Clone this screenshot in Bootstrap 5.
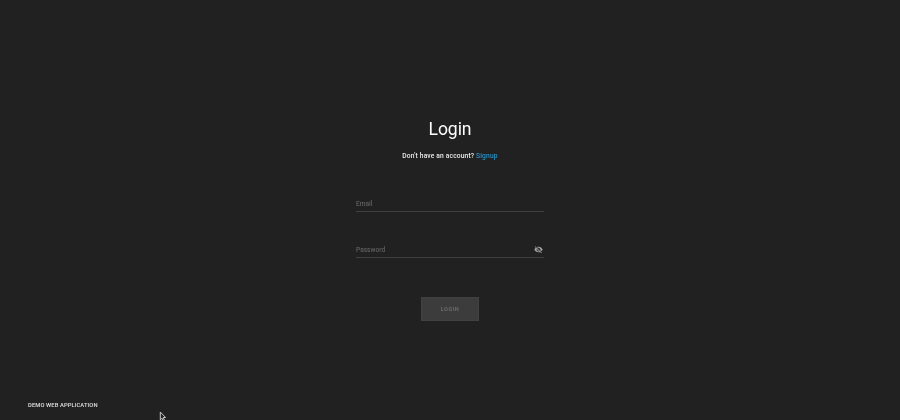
<!DOCTYPE html>
<html lang="en">
<head>
<meta charset="utf-8">
<meta name="viewport" content="width=device-width, initial-scale=1">
<title>Login</title>
<link href="https://cdn.jsdelivr.net/npm/bootstrap@5.3.0/dist/css/bootstrap.min.css" rel="stylesheet">
<style>
body { background: #212121; color: #eee; font-family: Roboto, sans-serif; font-size: 6.7px; line-height: 10px; }
.login-panel, .app-name { will-change: opacity; opacity: .99; }
.login-panel { width: 188px; padding-top: 118px; }
.login-title { font-size: 17.6px; line-height: 22px; font-weight: 400; color: #fff; letter-spacing: -.1px; }
.signup-line { margin-top: 11px; font-weight: 500; letter-spacing: .15px; }
.signup-line a { color: #2794cc; }
.line-field { height: 16px; border-bottom: 1px solid #414141; }
.email-field { margin-top: 35px; }
.password-field { margin-top: 30px; }
.line-field .form-control, .line-field .form-control:focus { height: 15px; padding: 1px 0 0; font-size: 6.6px; font-weight: 500; line-height: 14px; color: #eee; box-shadow: none; letter-spacing: 0; }
.line-field .form-control::placeholder { color: #606060; opacity: 1; }
.eye-button { width: 12px; height: 12px; line-height: 0; color: #a6a6a6; }
.login-button, .login-button:disabled { width: 58px; height: 24px; margin-top: 39px; padding: 1px 0 0; font-size: 5.6px; line-height: 1; font-weight: 700; letter-spacing: .5px; color: #6c6c6c; background: #3d3d3d; border-color: #424242; opacity: 1; }
.app-name { padding: 0 28px 10px; font-size: 5.8px; font-weight: 500; color: #e2e2e2; letter-spacing: .1px; }
.pointer { left: 159px; top: 411px; }
</style>
</head>
<body class="vh-100 overflow-hidden d-flex flex-column">
<main class="login-panel mx-auto">
  <h1 class="login-title text-center mb-0">Login</h1>
  <p class="signup-line text-center text-nowrap mb-0">Don't have an account? <a href="#" class="text-decoration-none">Signup</a></p>
  <form>
    <div class="line-field email-field">
      <input type="email" class="form-control bg-transparent border-0 rounded-0" placeholder="Email" aria-label="Email">
    </div>
    <div class="line-field password-field d-flex align-items-center">
      <input type="password" class="form-control bg-transparent border-0 rounded-0" placeholder="Password" aria-label="Password">
      <button type="button" class="eye-button btn border-0 p-0 flex-shrink-0" aria-label="Show password">
        <svg width="9" height="9" viewBox="0 0 24 24" fill="currentColor"><path d="M12 7c2.76 0 5 2.24 5 5 0 .65-.13 1.26-.36 1.83l2.92 2.92c1.51-1.26 2.7-2.89 3.43-4.75-1.73-4.39-6-7.5-11-7.5-1.4 0-2.74.25-3.98.7l2.16 2.16C10.74 7.13 11.35 7 12 7zM2 4.27l2.28 2.28.46.46C3.08 8.3 1.78 10.02 1 12c1.73 4.39 6 7.5 11 7.5 1.55 0 3.03-.3 4.38-.84l.42.42L19.73 22 21 20.73 3.27 3 2 4.27zM7.53 9.8l1.55 1.55c-.05.21-.08.43-.08.65 0 1.66 1.34 3 3 3 .22 0 .44-.03.65-.08l1.55 1.55c-.67.33-1.41.53-2.2.53-2.76 0-5-2.24-5-5 0-.79.2-1.53.53-2.2zm4.31-.78 3.15 3.15.02-.16c0-1.66-1.34-3-3-3l-.17.01z"/></svg>
      </button>
    </div>
    <button type="submit" class="login-button btn rounded-0 d-block mx-auto" disabled>LOGIN</button>
  </form>
</main>
<footer class="app-name mt-auto">DEMO WEB APPLICATION</footer>
<svg class="pointer position-absolute" width="8" height="9" viewBox="0 0 8 9" aria-hidden="true"><path d="M1.3 1V8.9L3 7.2l1 2.3 1.3-.6-1-2.4H6.6z" fill="#222" stroke="#c8c8c8" stroke-width="1"/></svg>
<script src="https://cdn.jsdelivr.net/npm/bootstrap@5.3.0/dist/js/bootstrap.bundle.min.js"></script>
</body>
</html>
